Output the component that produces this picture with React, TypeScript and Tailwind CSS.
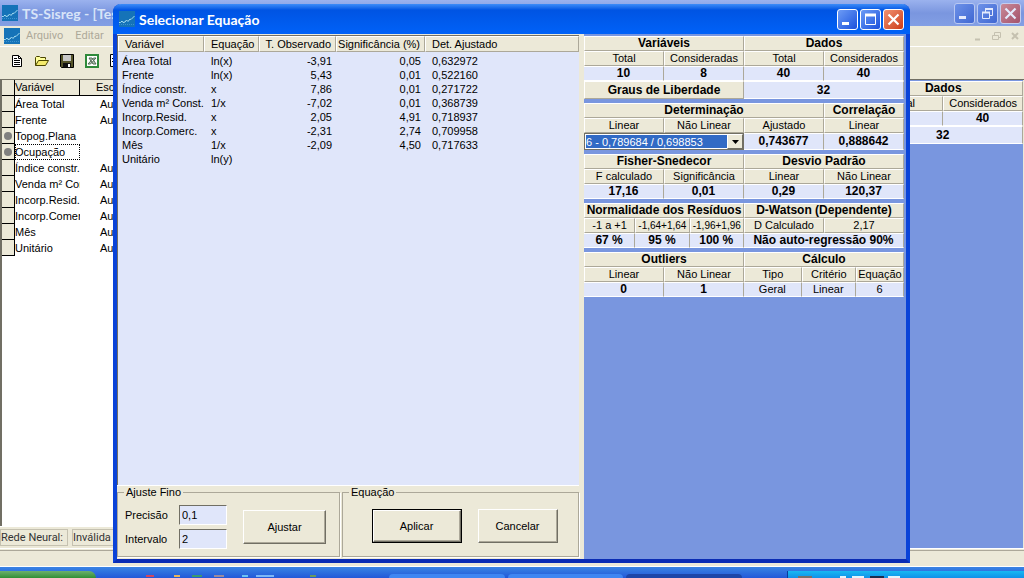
interface Cell {
  text: string
  kind: 'title' | 'label' | 'narrow' | 'value' | 'plain'
  span?: number
  tall?: boolean
}

interface Block {
  name: string
  cols: string[]
  rows: (Cell | 'combo')[][]
}

const cellStyles = {
  title: 'bg-[#ece9d8] text-[12px] font-bold border border-t-white border-l-white border-b-[#aca899] border-r-[#aca899]',
  label: 'bg-[#ece9d8] text-[11px] font-normal border border-t-white border-l-white border-b-[#aca899] border-r-[#aca899]',
  narrow: 'bg-[#ece9d8] text-[10px] font-normal border border-t-white border-l-white border-b-[#aca899] border-r-[#aca899]',
  value: 'bg-[#e0e6fa] text-[12px] font-bold border-t border-r border-b border-t-white border-b-white border-r-[#aca899]',
  plain: 'bg-[#e0e6fa] text-[11px] font-normal border-t border-r border-b border-t-white border-b-white border-r-[#aca899]',
}

const t = (text: string, span = 1): Cell => ({ text, kind: 'title', span })
const l = (text: string, span = 1): Cell => ({ text, kind: 'label', span })
const n = (text: string): Cell => ({ text, kind: 'narrow' })
const v = (text: string, span = 1): Cell => ({ text, kind: 'value', span })
const p = (text: string): Cell => ({ text, kind: 'plain' })

const quarters = ['w-1/4', 'w-1/4', 'w-1/4', 'w-1/4']

const blocks: Block[] = [
  {
    name: 'Variáveis e dados',
    cols: quarters,
    rows: [
      [t('Variáveis', 2), t('Dados', 2)],
      [l('Total'), l('Consideradas'), l('Total'), l('Considerados')],
      [v('10'), v('8'), v('40'), v('40')],
      [
        { text: 'Graus de Liberdade', kind: 'title', span: 2, tall: true },
        { text: '32', kind: 'value', span: 2, tall: true },
      ],
    ],
  },
  {
    name: 'Determinação e correlação',
    cols: quarters,
    rows: [
      [t('Determinação', 3), t('Correlação')],
      [l('Linear'), l('Não Linear'), l('Ajustado'), l('Linear')],
      ['combo', v('0,743677'), v('0,888642')],
    ],
  },
  {
    name: 'Fisher-Snedecor e desvio padrão',
    cols: quarters,
    rows: [
      [t('Fisher-Snedecor', 2), t('Desvio Padrão', 2)],
      [l('F calculado'), l('Significância'), l('Linear'), l('Não Linear')],
      [v('17,16'), v('0,01'), v('0,29'), v('120,37')],
    ],
  },
  {
    name: 'Normalidade e D-Watson',
    cols: ['w-[16%]', 'w-[17%]', 'w-[17%]', 'w-1/4', 'w-1/4'],
    rows: [
      [t('Normalidade dos Resíduos', 3), t('D-Watson (Dependente)', 2)],
      [l('-1 a +1'), n('-1,64+1,64'), n('-1,96+1,96'), l('D Calculado'), l('2,17')],
      [v('67 %'), v('95 %'), v('100 %'), v('Não auto-regressão 90%', 2)],
    ],
  },
  {
    name: 'Outliers e cálculo',
    cols: ['w-1/4', 'w-1/4', 'w-[18%]', 'w-[17%]', 'w-[15%]'],
    rows: [
      [t('Outliers', 2), t('Cálculo', 3)],
      [l('Linear'), l('Não Linear'), l('Tipo'), l('Critério'), l('Equação')],
      [v('0'), v('1'), p('Geral'), p('Linear'), p('6')],
    ],
  },
]

const equations = [
  ['Área Total', 'ln(x)', '-3,91', '0,05', '0,632972'],
  ['Frente', 'ln(x)', '5,43', '0,01', '0,522160'],
  ['Índice constr.', 'x', '7,86', '0,01', '0,271722'],
  ['Venda m² Const.', '1/x', '-7,02', '0,01', '0,368739'],
  ['Incorp.Resid.', 'x', '2,05', '4,91', '0,718937'],
  ['Incorp.Comerc.', 'x', '-2,31', '2,74', '0,709958'],
  ['Mês', '1/x', '-2,09', '4,50', '0,717633'],
  ['Unitário', 'ln(y)', '', '', ''],
]

const variables = [
  { name: 'Área Total', scale: 'Auto' },
  { name: 'Frente', scale: 'Auto' },
  { name: 'Topog.Plana', scale: '', off: true },
  { name: 'Ocupação', scale: '', off: true, focused: true },
  { name: 'Índice constr.', scale: 'Auto' },
  { name: 'Venda m² Con', scale: 'Auto' },
  { name: 'Incorp.Resid.', scale: 'Auto' },
  { name: 'Incorp.Comer', scale: 'Auto' },
  { name: 'Mês', scale: 'Auto' },
  { name: 'Unitário', scale: 'Auto' },
]

const AppIcon = () => (
  <svg viewBox="0 0 16 16" className="size-4 shrink-0" aria-hidden="true">
    <rect width="16" height="16" fill="#1573b8" />
    <path d="M0 11.500h1.500l1.500-1.500 1 1.500 2-.5 1.500-2 1.500 1.500L11 8l1 .5L15.500 5" fill="none" stroke="#a5dcf0" />
    <path d="M0 13.500h16" stroke="#3c93cf" strokeDasharray="1 1" />
  </svg>
)

const CaptionButton = ({ kind, faded }: { kind: 'min' | 'max' | 'restore' | 'close'; faded?: boolean }) => {
  const color =
    kind === 'close'
      ? faded
        ? 'bg-linear-to-br from-[#c98a98] to-[#a3526c] border-[#c3cdf0]'
        : 'bg-linear-to-br from-[#f0906f] to-[#cc3a12] border-white'
      : faded
        ? 'bg-linear-to-br from-[#6d91e8] to-[#4067d2] border-[#b9c8f2]'
        : 'bg-linear-to-br from-[#6d9bf5] to-[#1c4fdc] border-white'
  return (
    <button type="button" aria-label={kind} className={`size-[21px] shrink-0 rounded-[3px] border ${color}`}>
      <svg viewBox="0 0 19 19" fill="none" stroke={faded ? '#e4eafc' : '#fff'} className="size-full">
        {kind === 'min' && <path d="M4 13.500h7" strokeWidth="3" />}
        {kind === 'max' && (
          <>
            <path d="M4.500 4.500h10v10h-10z" />
            <path d="M4 5h11" strokeWidth="3" />
          </>
        )}
        {kind === 'restore' && (
          <>
            <path d="M7.500 8V5.500h7v6H12M4.500 8.500h7v6h-7z" />
            <path d="M7 5h8M4 8.500h8" strokeWidth="2" />
          </>
        )}
        {kind === 'close' && <path d="M4.500 4.500l10 10M14.500 4.500l-10 10" strokeWidth="2.200" />}
      </svg>
    </button>
  )
}

const StatTable = ({ block }: { block: Block }) => (
  <table aria-label={block.name} className="w-full table-fixed border-separate border-spacing-0 text-center">
    <colgroup>
      {block.cols.map((w, i) => (
        <col key={i} className={w} />
      ))}
    </colgroup>
    <tbody>
      {block.rows.map((row, r) => (
        <tr key={r}>
          {row.map((cell, c) =>
            cell === 'combo' ? (
              <td key={c} colSpan={2} className="p-0">
                <div className="relative border border-[#716f64] bg-white">
                  <select
                    aria-label="Determinação"
                    className="block h-[15px] w-full appearance-none border border-white bg-[#316ac5] text-[11px] leading-3 text-white"
                  >
                    <option>6 - 0,789684 / 0,698853</option>
                  </select>
                  <span className="pointer-events-none absolute inset-y-0 right-0 flex w-4 items-center justify-center border border-t-white border-l-white border-r-[#716f64] border-b-[#716f64] bg-[#ece9d8]">
                    <svg viewBox="0 0 7 4" className="h-1 w-[7px]">
                      <path d="M0 0h7L3.500 4z" />
                    </svg>
                  </span>
                </div>
              </td>
            ) : (
              <td
                key={c}
                colSpan={cell.span}
                className={`p-0 leading-[13px] whitespace-nowrap ${cell.tall ? 'h-[18px]' : 'h-[15px]'} ${cellStyles[cell.kind]}`}
              >
                {cell.text}
              </td>
            ),
          )}
        </tr>
      ))}
    </tbody>
  </table>
)

const Field = ({ id, label, value }: { id: string; label: string; value: string }) => (
  <div className="flex items-center">
    <label htmlFor={id} className="w-[54px]">
      {label}
    </label>
    <input
      id={id}
      defaultValue={value}
      className="h-5 w-12 border border-t-[#716f64] border-l-[#716f64] border-r-white border-b-white bg-[#e0e6fa] px-0.5"
    />
  </div>
)

const raised = 'border border-t-white border-l-white border-r-[#716f64] border-b-[#716f64] shadow-[inset_-1px_-1px_0_#aca899]'

const Dialog = () => (
  <section
    aria-label="Selecionar Equação"
    className="absolute top-1 right-[114px] bottom-[15px] left-[113px] flex flex-col rounded-t-lg border-x-4 border-b-4 border-x-[#0a43d8] border-b-[#0a2cb4] bg-[#ece9d8]"
  >
    <header className="-mx-1 flex h-[30px] shrink-0 items-center rounded-t-lg bg-linear-to-b from-[#3c8cf8] via-[#0054e3] via-20% to-[#0062f8] pr-1.5 pl-1.5">
      <AppIcon />
      <h2 className="ml-1 flex-1 font-[Lato,sans-serif] text-[14px] font-bold text-white">Selecionar Equação</h2>
      <div className="flex gap-0.5">
        <CaptionButton kind="min" />
        <CaptionButton kind="max" />
        <CaptionButton kind="close" />
      </div>
    </header>

    <div className="flex min-h-0 flex-1">
      {/* Equation list and adjustment boxes */}
      <div className="flex min-w-0 flex-1 flex-col pt-px">
        <div className="min-h-0 flex-1 border-t border-l border-[#716f64] bg-[#e0e6fa]">
          <table className="w-full table-fixed border-separate border-spacing-0 text-left">
            <colgroup>
              <col className="w-[86px]" />
              <col className="w-[55px]" />
              <col className="w-[77px]" />
              <col className="w-[89px]" />
              <col />
            </colgroup>
            <thead>
              <tr>
                {['Variável', 'Equação', 'T. Observado', 'Significância (%)', 'Det. Ajustado'].map((h, i) => (
                  <th
                    key={h}
                    className={`h-4 border border-t-white border-l-white border-r-[#aca899] border-b-[#aca899] bg-[#ece9d8] px-0 leading-[13px] font-normal whitespace-nowrap ${i === 2 || i === 3 ? 'pr-1 text-right' : 'pl-1.5'}`}
                  >
                    {h}
                  </th>
                ))}
              </tr>
            </thead>
            <tbody>
              <tr>
                <td colSpan={5} className="h-0.5 p-0" />
              </tr>
              {equations.map(row => (
                <tr key={row[0]}>
                  {row.map((text, i) => (
                    <td
                      key={i}
                      className={`h-3.5 p-0 leading-[14px] whitespace-nowrap ${i === 0 ? 'pl-1' : i === 2 || i === 3 ? 'pr-1 text-right' : 'pl-[7px]'}`}
                    >
                      {text}
                    </td>
                  ))}
                </tr>
              ))}
            </tbody>
          </table>
        </div>

        <div className="flex h-[74px] shrink-0 gap-0.5 border-t border-white pb-0.5">
          <fieldset className="w-[223px] border border-[#aca899] shadow-[1px_1px_0_#fff]">
            <legend className="ml-1.5 px-0.5 leading-[13px]">Ajuste Fino</legend>
            <div className="flex items-center gap-4 pt-1.5 pl-[7px]">
              <div className="flex flex-col gap-1">
                <Field id="precisao" label="Precisão" value="0,1" />
                <Field id="intervalo" label="Intervalo" value="2" />
              </div>
              <button type="button" className={`h-[34px] w-[83px] bg-[#ece9d8] ${raised}`}>
                Ajustar
              </button>
            </div>
          </fieldset>
          <fieldset className="flex-1 border border-[#aca899] shadow-[1px_1px_0_#fff]">
            <legend className="ml-1.5 px-0.5 leading-[13px]">Equação</legend>
            <div className="flex items-center justify-center gap-4 pt-2.5 pl-2">
              <div className="border border-black">
                <button type="button" className={`block h-8 w-[88px] bg-[#ece9d8] ${raised}`}>
                  Aplicar
                </button>
              </div>
              <button type="button" className={`h-[34px] w-20 bg-[#ece9d8] ${raised}`}>
                Cancelar
              </button>
            </div>
          </fieldset>
        </div>
      </div>

      {/* Statistics */}
      <div className="ml-[5px] w-[322px] shrink-0 bg-[#7996df] pt-0.5 pr-0.5">
        <div className="flex flex-col gap-1">
          {blocks.map(block => (
            <StatTable key={block.name} block={block} />
          ))}
        </div>
      </div>
    </div>
  </section>
)

const Toolbar = () => (
  <div className="flex h-[33px] shrink-0 items-center gap-[9px] border-t border-white pb-1 pl-[9px]">
    <button type="button" aria-label="Novo">
      <svg viewBox="0 0 16 16" className="size-4">
        <path d="M3.500 2.500h6l3 3v8h-9z" fill="#fff" stroke="#000" />
        <path d="M9.500 2.500v3h3M5 5.500h3M5 7.500h6M5 9.500h6M5 11.500h6" fill="none" stroke="#000" />
      </svg>
    </button>
    <button type="button" aria-label="Abrir">
      <svg viewBox="0 0 16 16" className="size-4">
        <path d="M1.500 12.500v-8l1-1h3l1 1h5v2" fill="#ffff9c" stroke="#4a4500" />
        <path d="M1.500 12.500l3-5h10l-3 5z" fill="#f4ea6c" stroke="#4a4500" />
      </svg>
    </button>
    <button type="button" aria-label="Salvar">
      <svg viewBox="0 0 16 16" className="size-4">
        <path d="M1.500 1.500h13v13h-12l-1-1z" fill="#55542a" stroke="#000" />
        <path d="M4 2h8v6H4z" fill="#c8c8c8" />
        <path d="M4 10h8v4.500H4z" fill="#111" />
        <path d="M9 11h2v3H9z" fill="#fff" />
      </svg>
    </button>
    <button type="button" aria-label="Excel">
      <svg viewBox="0 0 16 16" className="size-4">
        <path d="M2 2h12v12H2z" fill="#fff" stroke="#2f8a3b" strokeWidth="2" />
        <path d="M5 5h3l4 6H9zM12 5H9.500L4 11h2.500z" fill="#b8c8b8" stroke="#4f6a55" />
      </svg>
    </button>
    <button type="button" aria-label="Relatório">
      <svg viewBox="0 0 16 16" className="size-4">
        <path d="M1.500 1.500h10v12h-10z" fill="#fff" stroke="#000" />
        <path d="M3 5.500h6M3 8.500h6" stroke="#000" />
      </svg>
    </button>
  </div>
)

const Taskbar = () => (
  <div className="flex h-3 shrink-0 items-end border-t border-white bg-linear-to-b from-[#3a84e4] to-[#2458d8]">
    <div className="h-[7px] w-24 rounded-tr-lg bg-linear-to-b from-[#6cb06c] to-[#2f8f35]" />
    <svg viewBox="0 0 180 3" className="ml-[50px] h-[3px] w-[180px]" aria-hidden="true">
      <path d="M0 1h8" stroke="#d2455c" strokeWidth="2" />
      <path d="M28 1h6" stroke="#e8b45c" strokeWidth="2" />
      <path d="M46 1h10" stroke="#3a9a6c" strokeWidth="2" />
      <path d="M68 1h10" stroke="#9a8a9c" strokeWidth="2" />
      <path d="M96 1h6" stroke="#6cc4f4" strokeWidth="2" />
      <path d="M110 1h18" stroke="#7cb8f8" strokeWidth="2" />
      <path d="M164 1h6" stroke="#6a9a5c" strokeWidth="2" />
    </svg>
    <div className="flex flex-1 gap-[3px] pr-[45px] pl-[63px]">
      <div className="h-1 flex-1 rounded-t-sm bg-[#3f86f2]" />
      <div className="h-1 flex-1 rounded-t-sm bg-[#3f86f2]" />
      <div className="h-1 flex-1 rounded-t-sm bg-[#1c46a8]" />
    </div>
    <div className="h-[7px] w-[237px] border-l border-[#0a3c9c] bg-linear-to-b from-[#19b9f2] to-[#1290e8] pt-1">
      <svg viewBox="0 0 140 3" className="h-[3px] w-[140px]" aria-hidden="true">
        <path d="M10 2h14" stroke="#77706c" strokeWidth="2" />
        <path d="M52 2h6M64 2h12M100 2h12M140 2h0" stroke="#e4f4fc" strokeWidth="2" />
        <path d="M82 2h14" stroke="#1c2c4c" strokeWidth="2" />
      </svg>
    </div>
  </div>
)

const App = () => {
  return (
    <div className="relative flex h-screen flex-col overflow-hidden bg-[#ece9d8] font-['Liberation_Sans',Arial,sans-serif] text-[11px] text-black">
      <header className="flex h-[26px] shrink-0 items-center bg-linear-to-b from-[#9bb2ee] via-[#7a96df] to-[#839fe4] pr-[3px] pl-0.5">
        <AppIcon />
        <h1 className="ml-1 flex-1 font-[Lato,sans-serif] text-[14px] font-bold text-[#d8e4f8]">TS-Sisreg - [Teste]</h1>
        <div className="flex gap-0.5">
          <CaptionButton kind="min" faded />
          <CaptionButton kind="restore" faded />
          <CaptionButton kind="close" faded />
        </div>
      </header>

      <nav className="flex h-5 shrink-0 items-center pl-1 font-[Roboto,sans-serif] text-[#aca899]">
        <AppIcon />
        <button type="button" className="ml-1.5">
          Arquivo
        </button>
        <button type="button" className="ml-3">
          Editar
        </button>
        <svg viewBox="0 0 46 10" className="mr-1 ml-auto h-2.5 w-[46px]" fill="none" stroke="#c5c1b0">
          <path d="M1 8.500h5" strokeWidth="2" />
          <path d="M20.500 4V1.500h6v5H24M18.500 4.500h6v4h-6z" />
          <path d="M38 2l6 6M44 2l-6 6" strokeWidth="2" />
        </svg>
      </nav>

      <Toolbar />

      <main className="flex min-h-0 flex-1 border-t border-[#716f64]">
        <div className="flex min-w-0 flex-1 flex-col">
          <div className="min-h-0 flex-1 overflow-hidden border-l-2 border-[#716f64] bg-white">
            <table className="w-[135px] table-fixed border-separate border-spacing-0 text-left">
              <colgroup>
                <col className="w-[13px]" />
                <col className="w-[65px]" />
                <col className="w-[57px]" />
              </colgroup>
              <thead>
                <tr className="bg-[#ece9d8] leading-[15px]">
                  <th className="border-r border-b border-black p-0" />
                  <th className="border-r border-b border-black p-0 font-normal">Variável</th>
                  <th className="border-r border-b border-black p-0 pl-4 font-normal">Escala</th>
                </tr>
              </thead>
              <tbody>
                {variables.map(item => (
                  <tr key={item.name}>
                    <td className="h-4 border-r border-b border-black bg-[#ece9d8] p-0">
                      {item.off && <span className="mx-auto block size-2 rounded-full bg-[#808080]" />}
                    </td>
                    <td
                      className={`overflow-hidden p-0 leading-[14px] whitespace-nowrap ${item.focused ? 'outline outline-dotted -outline-offset-1 outline-black' : ''}`}
                    >
                      {item.name}
                    </td>
                    <td className="p-0 pl-5 leading-[14px]">{item.scale}</td>
                  </tr>
                ))}
              </tbody>
            </table>
          </div>
          <div className="flex h-[22px] shrink-0 items-center gap-1 border-t border-white font-[Roboto,sans-serif] text-[#333]">
            <span className="h-[17px] w-[68px] border border-[#c5c1b0] leading-[15px]">Rede Neural:</span>
            <span className="h-[17px] w-20 border border-[#c5c1b0] leading-[15px]">Inválida</span>
          </div>
        </div>
        <div className="w-[320px] shrink-0 border-r border-[#ece9d8] bg-[#7996df] pt-px">
          <StatTable block={blocks[0]} />
        </div>
      </main>

      <footer className="h-[18px] shrink-0 border-t border-white pt-px">
        <div className="h-full border-t border-[#aca899]" />
      </footer>

      <Taskbar />

      <Dialog />
    </div>
  )
}

export default App
